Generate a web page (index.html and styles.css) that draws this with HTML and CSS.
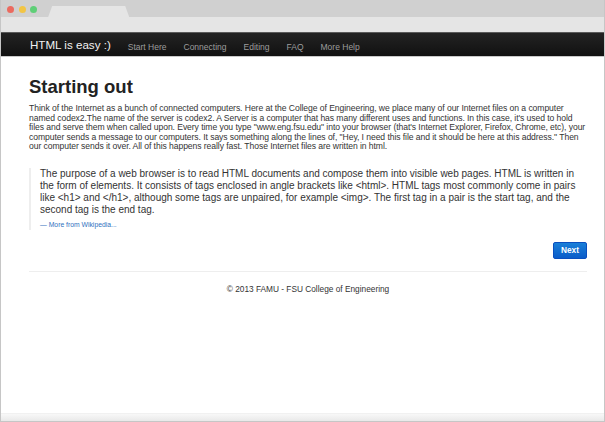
FILE: index.html
```html
<!DOCTYPE html>
<html lang="en">
<head>
<meta charset="utf-8">
<title>HTML is easy :)</title>
<link rel="stylesheet" href="styles.css">
</head>
<body>
<div class="window">
  <div class="titlebar">
    <div class="lights">
      <span class="light red"></span>
      <span class="light yellow"></span>
      <span class="light green"></span>
    </div>
    <div class="tab"></div>
  </div>
  <div class="toolbar"></div>
  <nav class="navbar">
    <a class="brand" href="#">HTML is easy :)</a>
    <ul class="nav">
      <li><a href="#">Start Here</a></li>
      <li><a href="#">Connecting</a></li>
      <li><a href="#">Editing</a></li>
      <li><a href="#">FAQ</a></li>
      <li><a href="#">More Help</a></li>
    </ul>
  </nav>
  <main class="content">
    <h1 class="title">Starting out</h1>
    <p class="intro">Think of the Internet as a bunch of connected computers. Here at the College of Engineering, we place many of our Internet files on a computer named codex2.The name of the server is codex2. A Server is a computer that has many different uses and functions. In this case, it's used to hold files and serve them when called upon. Every time you type "www.eng.fsu.edu" into your browser (that's Internet Explorer, Firefox, Chrome, etc), your computer sends a message to our computers. It says something along the lines of, "Hey, I need this file and it should be here at this address." Then our computer sends it over. All of this happens really fast. Those Internet files are written in html.</p>
    <blockquote class="quote">
      <p>The purpose of a web browser is to read HTML documents and compose them into visible web pages. HTML is written in the form of elements. It consists of tags enclosed in angle brackets like &lt;html&gt;. HTML tags most commonly come in pairs like &lt;h1&gt; and &lt;/h1&gt;, although some tags are unpaired, for example &lt;img&gt;. The first tag in a pair is the start tag, and the second tag is the end tag.</p>
      <small class="source"><a href="#">&mdash; More from Wikipedia...</a></small>
    </blockquote>
    <div class="pager">
      <a class="btn" href="#">Next</a>
    </div>
    <hr class="rule">
    <footer class="footer">&copy; 2013 FAMU - FSU College of Engineering</footer>
  </main>
  <div class="statusbar"></div>
</div>
</body>
</html>
```
FILE: styles.css
```css
* { box-sizing: border-box; }

html, body {
  margin: 0;
  padding: 0;
  background: #ffffff;
}

body {
  font-family: "Liberation Sans", Arial, Helvetica, sans-serif;
  color: #333333;
}

.window {
  width: 605px;
  height: 422px;
  display: flex;
  flex-direction: column;
  border: 1px solid #c6c6c6;
  border-top: 0;
  background: #ffffff;
  overflow: hidden;
}

.titlebar {
  height: 17px;
  flex: none;
  display: flex;
  align-items: flex-end;
  background: #d0d0d0;
  margin: 0 -1px;
}

.lights {
  align-self: flex-start;
  display: flex;
  gap: 4.6px;
  padding: 6px 0 0 7px;
}

.light {
  width: 7px;
  height: 7px;
  border-radius: 50%;
}
.red { background: #eb6a5f; }
.yellow { background: #f2c545; }
.green { background: #5fcf77; }

.tab {
  width: 81px;
  height: 11px;
  margin-left: 11px;
  background: #e5e5e5;
  clip-path: polygon(4px 0, 77px 0, 81px 100%, 0 100%);
}

.toolbar {
  height: 15px;
  flex: none;
  background: #e5e5e5;
}

.navbar {
  height: 25px;
  flex: none;
  display: flex;
  align-items: center;
  padding-left: 29px;
  border-top: 1px solid #5a5a5a;
  border-bottom: 1px solid #c9c9c9;
  background: linear-gradient(#232323, #111111);
}

.brand {
  color: #f2f2f2;
  font-size: 11.6px;
  text-decoration: none;
  line-height: 14px;
}

.nav {
  list-style: none;
  margin: 0 0 0 17px;
  padding: 0;
  display: flex;
  gap: 17px;
}

.nav a {
  color: #9d9d9d;
  font-size: 8.5px;
  text-decoration: none;
}

.content {
  flex: 1;
  padding: 19px 17px 0 28px;
}

.title {
  margin: 0 0 6px;
  font-size: 18.5px;
  line-height: 22px;
  font-weight: bold;
  color: #222222;
}

.intro {
  margin: 0 0 16px;
  font-size: 8.6px;
  line-height: 9.5px;
  letter-spacing: -0.07px;
}

.quote {
  margin: 0 0 12px;
  padding-left: 9px;
  border-left: 2.5px solid #eeeeee;
}

.quote p {
  margin: 0 0 4px;
  font-size: 10px;
  line-height: 12px;
}

.source {
  display: block;
  font-size: 6.8px;
  line-height: 10px;
}

.source a {
  color: #2f72c0;
  text-decoration: none;
}

.pager {
  display: flex;
  justify-content: flex-end;
}

.btn {
  display: block;
  padding: 3px 7px;
  font-size: 8.3px;
  line-height: 9.5px;
  font-weight: bold;
  color: #ffffff;
  text-decoration: none;
  border: 1px solid #0a4fbf;
  border-radius: 2px;
  background: linear-gradient(#1a7fd8, #0a5cc9);
}

.rule {
  margin: 12px 0 13px;
  border: 0;
  border-top: 1px solid #eeeeee;
}

.footer {
  text-align: center;
  font-size: 8.3px;
  line-height: 9.5px;
}

.statusbar {
  height: 8px;
  flex: none;
  background: linear-gradient(#f8f8f8, #e9e9e9);
  border-top: 1px solid #f1f1f1;
}
```
